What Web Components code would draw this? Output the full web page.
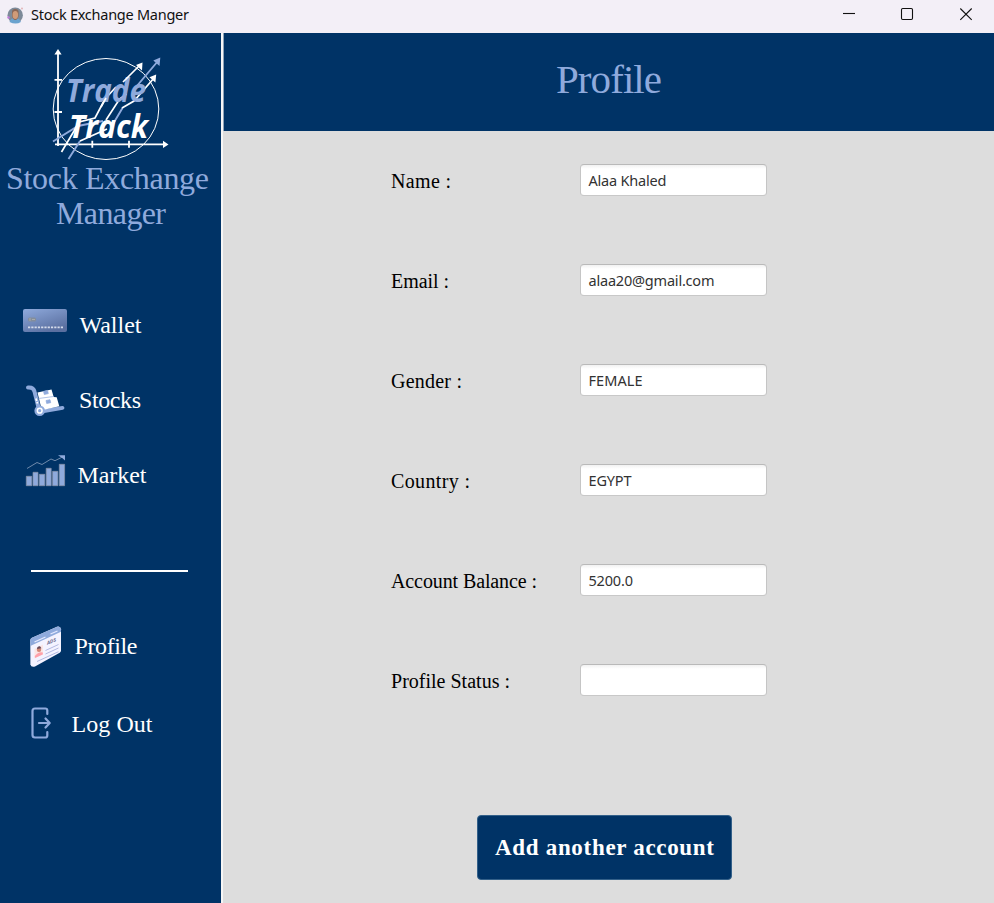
<!DOCTYPE html>
<html lang="en">
<head>
<meta charset="utf-8">
<title>Stock Exchange Manger</title>
<style>
html,body{margin:0;height:100%;overflow:hidden}
</style>
</head>
<body>
<stock-app></stock-app>
<script>
const define = (name, html, setup) => {
  const t = document.createElement('template');
  t.innerHTML = html;
  customElements.define(name, class extends HTMLElement {
    connectedCallback() {
      if (this.shadowRoot) return;
      this.attachShadow({mode: 'open'}).append(t.content.cloneNode(true));
      if (setup) setup(this, this.shadowRoot);
    }
  });
};

/* Text whose tracking is adjusted so that the line spans the given width. */
define('fit-text', `<style>
:host{display:block;white-space:nowrap;width:max-content}
span{display:inline-block}
</style><span><slot></slot></span>`, (el, root) => {
  const s = root.querySelector('span');
  const want = +el.getAttribute('span');
  if (!want) return;
  const text = root.querySelector('slot').assignedNodes({flatten: true}).map(n => n.textContent).join('').trim();
  const ls = (want - s.getBoundingClientRect().width) / (text.length - 1);
  s.style.letterSpacing = ls + 'px';
  s.style.marginRight = -ls + 'px';
});

define('title-bar', `<style>
:host{display:flex;align-items:center;height:33px;background:#f3eff7;color:#111;font:14.500px/20px "Noto Sans","Open Sans",sans-serif;box-sizing:border-box}
.app{width:18px;height:20px;margin:-4px 7px 0 6px}
fit-text{margin-top:-5px}
.btns{margin-left:auto;width:174px;height:33px}
</style>
<svg class="app" viewBox="6 4 18 20"><circle cx="15.2" cy="14.3" r="7.7" fill="#7d8a99"/><path d="M9.500 21q1-4 5.700-4t5.700 4q-5 3-11.400 0z" fill="#6ba3cf"/><path d="M12 11q0-3 3.300-3t3.300 3v4q-1 4-3.300 4t-3.300-4z" fill="#8a6655"/><ellipse cx="15.300" cy="14" rx="2.800" ry="4" fill="#d09b78"/><circle cx="8.500" cy="16.500" r="1.200" fill="#c77be0"/><circle cx="22" cy="7.500" r="1" fill="#e3b5b8"/></svg>
<fit-text span="158"><slot></slot></fit-text>
<svg class="btns" viewBox="820 0 174 33" fill="none" stroke="#111" stroke-width="1.1"><path d="M843 13.500h12"/><rect x="901.500" y="8.500" width="11" height="11" rx="1.200"/><path d="M960.300 8.500l11.400 11.400M971.700 8.500l-11.400 11.400"/></svg>`);

define('brand-mark', `<style>
:host{display:block}
svg{display:block;width:120px;height:114px;margin-left:50px}
text{font:italic 700 32px "Open Sans","Noto Sans",sans-serif}
.name{color:#8faadc;font:32px/35px "Liberation Serif",serif;height:70px}
.a{margin-left:6px}.b{margin-left:56px}
</style>
<svg viewBox="50 47 120 114" fill="none">
<ellipse cx="106" cy="109" rx="52.800" ry="50.500" stroke="#fff" stroke-width="1"/>
<path d="M58 54v92M55 144.400h109M54.500 79.800h7.500M54.500 112h7.500M92.300 140.800v7M129 140.800v7" stroke="#fff" stroke-width="1.800"/>
<path d="M58 49l3.600 5.500h-7.200zM168.500 144.400l-5.500-3.700v7.400z" fill="#fff"/>
<path d="M53 141.500L78 126l25-5M136 87l22-26M68.500 159L80 141M113 124l9.500-16" stroke="#8faadc" stroke-width="1.900"/>
<path d="M61.500 152L74 131l5-9 16-4 10-19 11-12M80 141l27-12M106 120l13.600-21 7-5M122 108l12-7 20-23" stroke="#fff" stroke-width="1.700"/>
<text x="66" y="102" textLength="80" lengthAdjust="spacingAndGlyphs" fill="#8faadc">Trade</text>
<path d="M123 82l17-17M101 107l5-9" stroke="#fff" stroke-width="1.700"/>
<text x="69" y="137.500" textLength="79" lengthAdjust="spacingAndGlyphs" fill="#fff">Track</text>
<path d="M142.500 62.500l-.5 8-6-5.600zM156.200 74.500l-.8 8-6-5.300z" fill="#fff"/><path d="M160.300 57.500l-.8 8.500-6.200-5.600z" fill="#8faadc"/>
</svg>
<div class="name"><fit-text class="a" span="203">Stock Exchange</fit-text><fit-text class="b" span="110">Manager</fit-text></div>`);

const icons = {
wallet: `<svg viewBox="15 305 60 40"><defs><linearGradient id="g" x1="0" y1="0" x2=".6" y2="1"><stop stop-color="#8faadc"/><stop offset="1" stop-color="#5a6fa0"/></linearGradient></defs><rect x="23" y="309" width="44" height="23" rx="2" fill="url(#g)"/><rect x="28" y="317.500" width="8" height="4" rx="1.500" fill="#838d9c"/><path d="M30 318v3M32 319.500h3" stroke="#b0b2ae" stroke-width=".8"/><path d="M28 327.300h35" stroke="#d5dbea" stroke-width="1.700" stroke-dasharray="2.200 1.080"/></svg>`,
stocks: `<svg viewBox="15 380 60 40"><path d="M28 387.500q5.500-.5 6.500 4l5 20" fill="none" stroke="#8faadc" stroke-width="4" stroke-linecap="round"/><path d="M41 411.700l21.500-3.800" stroke="#8faadc" stroke-width="3.800" stroke-linecap="round"/><path d="M37.500 392.500l14-3 2.200 7.500 3 .3 2.600 9-17.500 4z" fill="#fff"/><path d="M43.500 391.300l.8 3.200 4-.9-.8-3.200zM46 400.500l.7 3 4-.8-.7-3zM38.500 398.500l15-2" fill="#8faadc" stroke="#8faadc" stroke-width=".7"/><path d="M36 398.500l1.500 5" stroke="#fff" stroke-width="1.800" stroke-dasharray="2.500 1.200"/><circle cx="39.700" cy="410.700" r="4.200" fill="#fff" stroke="#8faadc" stroke-width="2.200"/><circle cx="39.700" cy="410.700" r="1.600" fill="#8faadc"/></svg>`,
market: `<svg viewBox="15 455 60 40"><g fill="#8faadc" stroke="#8992a5" stroke-width=".7"><path d="M26.300 476.300h5.500v9.400h-5.500zM33 472.300h5v13.400h-5zM39.300 474.300h5.500v11.400h-5.500zM46.200 468.300h5v17.400h-5zM52.600 471.300h5.300v14.400h-5.300zM59.300 464.300h5.300v21.400h-5.300z"/></g><path d="M27 468.500l10-6 5 2 9-5.500 4 1.700 8-4" fill="none" stroke="#7b93b2" stroke-width=".9"/><path d="M58 455.200h7v5.300l-2.500-2.300z" fill="#8faadc"/></svg>`,
profile: `<svg viewBox="15 626 60 40" style="overflow:visible"><path d="M30.300 640q.2-1.500 1.700-2.300l25-11q3.500-.8 4 2.500v21.300q0 1.500-1.300 2.300L35 666.500q-4 1-4.600-2z" fill="#f4f3ff"/><path d="M30.300 646v-6q.2-1.500 1.700-2.300l25-11q3.500-.8 4 2.500v2.500z" fill="#8faadc"/><path d="M34.500 642l11-5M50.500 634l7-3" stroke="#e5eaff" stroke-width="1.300"/><path d="M34.500 649l8.500-4.500v9.500L34.500 658.500z" fill="#fae5e4"/><path d="M34.800 656q4-5 8-3.500v2L35 658z" fill="#ffa1aa"/><circle cx="39" cy="649.700" r="2.200" fill="#d48876"/><path d="M37 649q0-3 3-2.800l1.500 2z" fill="#674b5b"/><path d="M45.500 650.500l13-6M45.500 654l13-6M37 661.500l21.500-9.800" stroke="#a9b1dc" stroke-width=".9"/><text transform="matrix(.9 -.38 0 1 47 645)" font-family="Open Sans" font-weight="700" font-size="5" fill="#65658a">ADS</text></svg>`,
logout: `<svg viewBox="15 704 60 40"><path d="M47.300 714v-3.500q0-2-2-2H35q-2.500 0-2.500 2.500v24q0 2.500 2.500 2.500h10.300q2 0 2-2V732M39 723h10M45.500 718.500l4.200 4.500-4.200 4.500" fill="none" stroke="#8faadc" stroke-width="2.200" stroke-linecap="round" stroke-linejoin="round"/></svg>`
};
define('nav-item', `<style>
:host{display:flex;height:40px;color:#fff;font:24px/40px "Liberation Serif",serif;padding-left:15px}
.icon{width:60px;height:40px;flex:none}
svg{display:block;width:60px;height:40px}
</style><div class="icon"></div><fit-text><slot></slot></fit-text>`, (el, root) => {
  root.querySelector('.icon').innerHTML = icons[el.getAttribute('icon')];
  const t = root.querySelector('fit-text');
  t.style.marginLeft = el.getAttribute('indent') + 'px';
  const s = t.shadowRoot.querySelector('span');
  const ls = (+el.getAttribute('span') - s.getBoundingClientRect().width) / (el.textContent.length - 1);
  s.style.letterSpacing = ls + 'px';
});

define('side-bar', `<style>
:host{display:flex;flex-direction:column;width:221px;background:#003366;padding-top:14px;border-right:2px solid #f6f6f6;box-sizing:content-box}
.top{display:grid;gap:35px;margin-top:74px}
hr{width:157px;height:1.500px;border:0;background:#fff;margin:75px 0 0 31px}
.low{display:grid;gap:38px;margin-top:54.500px}
</style>
<brand-mark></brand-mark>
<div class="top">
<nav-item icon="wallet" indent="4.500" span="62">Wallet</nav-item>
<nav-item icon="stocks" indent="4" span="62">Stocks</nav-item>
<nav-item icon="market" indent="2.500" span="69">Market</nav-item>
</div><hr>
<div class="low">
<nav-item icon="profile" indent="-0.500" span="63">Profile</nav-item>
<nav-item icon="logout" indent="-3.500" span="81">Log Out</nav-item>
</div>`);

define('page-header', `<style>
:host{display:flex;justify-content:center;height:98px;background:#003366;color:#8faadc;font:41px/93px "Liberation Serif",serif}
</style><fit-text span="106"><slot></slot></fit-text>`);

define('form-row', `<style>
:host{display:grid;grid-template-columns:189px 187px;height:32px;align-items:start;color:#000;font:20px/34px "Liberation Serif",serif}
.field{height:32px;box-sizing:border-box;border:1px solid #c3c3c3;border-color:#b9b9b9 #c5c5c5 #c8c8c8;border-radius:4px;background:linear-gradient(#f1f1f1,#fff 4px);padding-left:7.500px;font:14.500px/31px "Noto Sans","Open Sans",sans-serif;color:#323232}
</style><div class="l"></div><div class="field"></div>`, (el, root) => {
  const put = (sel, text, w) => {
    const f = document.createElement('fit-text');
    f.textContent = text;
    f.setAttribute('span', w);
    root.querySelector(sel).append(f);
  };
  put('.l', el.getAttribute('label'), el.getAttribute('lw'));
  if (el.getAttribute('value')) put('.field', el.getAttribute('value'), el.getAttribute('vw'));
});

define('action-button', `<style>
:host{display:block;width:255px;height:65px}
button{display:flex;justify-content:center;width:100%;height:100%;border:1px solid #336089;border-radius:4px;background:#003366;color:#fff;padding:0;font:bold 23px/63px "Liberation Serif",serif}
</style><button><fit-text span="219"><slot></slot></fit-text></button>`);

define('stock-app', `<style>
:host{display:flex;flex-direction:column;width:994px;height:903px;background:#ddd}
.body{display:flex;flex:1}
main{flex:1;display:flex;flex-direction:column}
page-header{border-left:1px solid #8fa3b8}
.rows{display:grid;gap:68px;margin:33px 0 0 168px}
action-button{margin:119px 0 0 254px}
</style>
<title-bar>Stock Exchange Manger</title-bar>
<div class="body"><side-bar></side-bar>
<main><page-header>Profile</page-header>
<div class="rows">
<form-row label="Name :" lw="60" value="Alaa Khaled" vw="78"></form-row>
<form-row label="Email :" lw="58" value="alaa20@gmail.com" vw="126"></form-row>
<form-row label="Gender :" lw="71" value="FEMALE" vw="54"></form-row>
<form-row label="Country :" lw="79" value="EGYPT" vw="43"></form-row>
<form-row label="Account Balance :" lw="146" value="5200.0" vw="44.500"></form-row>
<form-row label="Profile Status :" lw="119"></form-row>
</div>
<action-button>Add another account</action-button>
</main></div>`);
</script>
</body>
</html>
